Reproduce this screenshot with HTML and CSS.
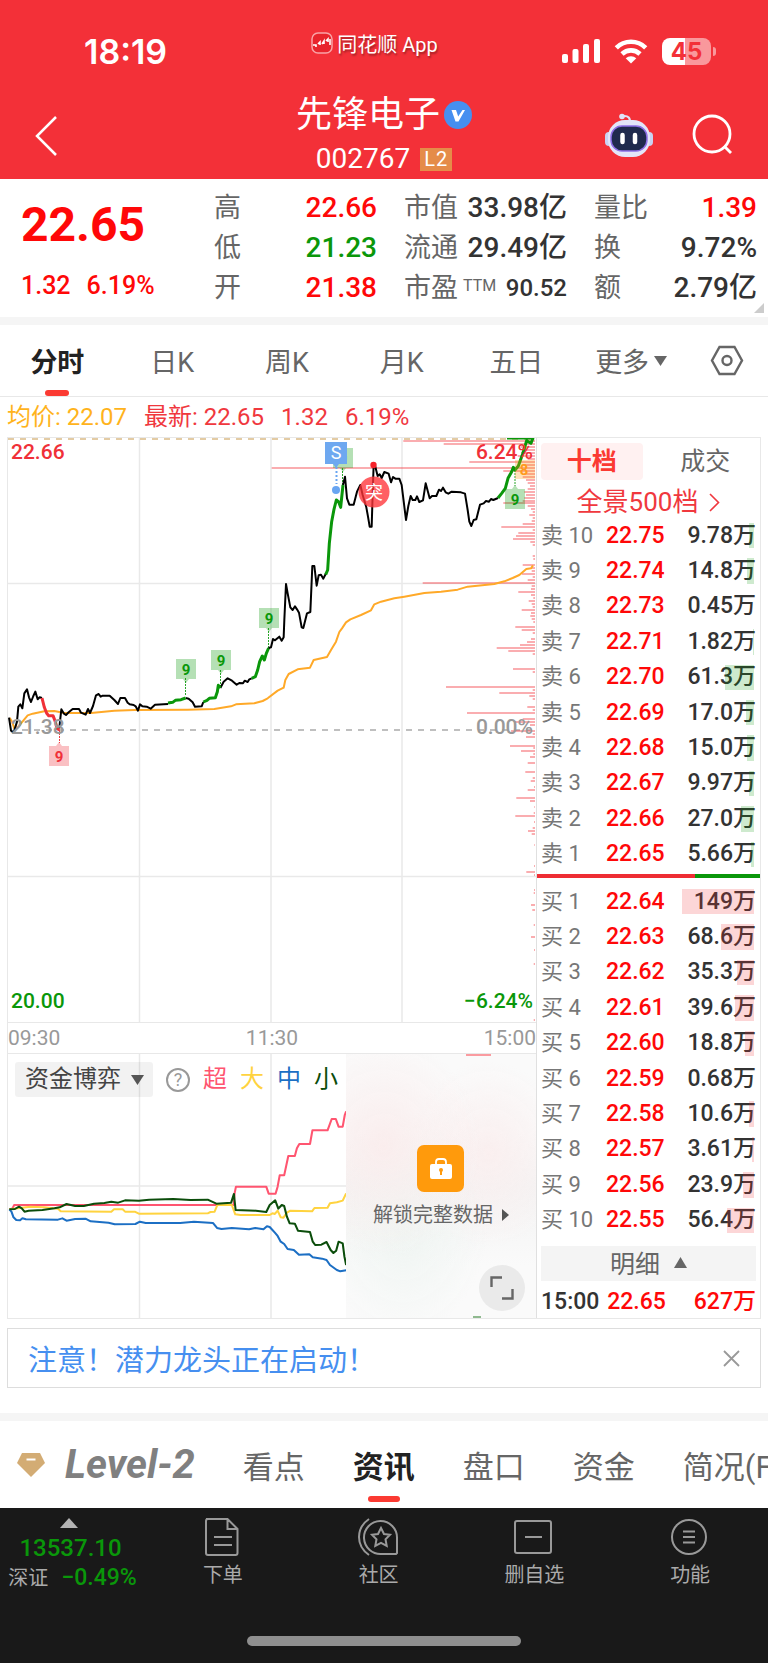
FILE: index.html
```html
<!DOCTYPE html>
<html lang="zh-CN">
<head>
    <meta charset="UTF-8">
    <meta name="viewport" content="width=device-width, initial-scale=1.0">
    <title>先锋电子 002767</title>
    <link rel="stylesheet" href="styles.css">
</head>
<body>
    <header class="header">
        <div class="status-bar">
            <span class="clock">18:19</span>
            <span class="app-name">
                <svg width="22" height="22" viewBox="0 0 22 22">
                    <rect x="1" y="1" width="20" height="20" rx="6" fill="#e8242c" stroke="#f9a3a6" stroke-width="1.5"/>
                    <path d="M2 13h3v2M7 12l2-2v3M11 12l2-3v3M15 9l2-2v3M19 7v6" fill="none" stroke="#fff" stroke-width="1.6"/>
                </svg>
                同花顺 App
            </span>
            <span class="status-icons">
                <svg width="38" height="25" viewBox="0 0 38 25" fill="#fff">
                    <rect x="0" y="15" width="6" height="9" rx="2"/>
                    <rect x="10.500" y="10" width="6" height="14" rx="2"/>
                    <rect x="21" y="5" width="6" height="19" rx="2"/>
                    <rect x="32" y="0" width="6" height="24" rx="2"/>
                </svg>
                <svg width="34" height="25" viewBox="0 0 34 25" fill="none" stroke="#fff" stroke-width="4.600">
                    <path d="M2.300 8.800a21 21 0 0 1 29.400 0"/>
                    <path d="M8 15a13 13 0 0 1 18 0"/>
                    <path d="M11.700 19.200a8 8 0 0 1 10.600 0L17 24.500z" fill="#fff" stroke="none"/>
                </svg>
                <span class="battery"><span class="battery-level">45</span></span>
            </span>
        </div>
        <div class="title-bar">
            <button class="icon-button" aria-label="返回">
                <svg width="24" height="42" viewBox="0 0 24 42" fill="none" stroke="#fff" stroke-width="2.500"><path d="M22 2L3 21l19 19"/></svg>
            </button>
            <div class="title">
                <h1>先锋电子
                    <svg width="28" height="28" viewBox="0 0 28 28"><circle cx="14" cy="14" r="14" fill="#468ff0"/><path d="M7.500 9h4.500l2.200 6.500L18.500 9H21l-6.500 11.500h-3z" fill="#fff"/></svg>
                </h1>
                <p>002767 <span class="l2">L2</span></p>
            </div>
            <div class="title-actions">
                <button class="icon-button" aria-label="智能助手">
                    <svg width="48" height="46" viewBox="0 0 48 46">
                        <path d="M18 4q8-1 7 8" fill="none" stroke="#dfe3f8" stroke-width="2"/>
                        <circle cx="17" cy="4.500" r="2.800" fill="#dfe3f8"/>
                        <rect x="0" y="20" width="8" height="14" rx="4" fill="#c9d2f2"/>
                        <rect x="40" y="20" width="8" height="14" rx="4" fill="#c9d2f2"/>
                        <rect x="3" y="8" width="42" height="37" rx="17" fill="#e3e5f8"/>
                        <rect x="6" y="14" width="36" height="25" rx="11" fill="#1f2a4d" stroke="#8d6fe6" stroke-width="1.500"/>
                        <path d="M17.500 23v7M30 23v7" stroke="#fff" stroke-width="4.500" stroke-linecap="round"/>
                    </svg>
                </button>
                <button class="icon-button" aria-label="搜索">
                    <svg width="42" height="42" viewBox="0 0 42 42" fill="none" stroke="#fff" stroke-width="2.800"><circle cx="20" cy="20" r="18"/><path d="M32 32l7 7"/></svg>
                </button>
            </div>
        </div>
    </header>

    <section class="quote">
        <div class="quote-price">
            <strong>22.65</strong>
            <span>1.32</span><span>6.19%</span>
        </div>
        <dl>
            <div><dt>高</dt><dd class="red">22.66</dd></div>
            <div><dt>低</dt><dd class="green">21.23</dd></div>
            <div><dt>开</dt><dd class="red">21.38</dd></div>
        </dl>
        <dl>
            <div><dt>市值</dt><dd>33.98亿</dd></div>
            <div><dt>流通</dt><dd>29.49亿</dd></div>
            <div><dt>市盈<sup>TTM</sup></dt><dd class="small">90.52</dd></div>
        </dl>
        <dl>
            <div><dt>量比</dt><dd class="red">1.39</dd></div>
            <div><dt>换</dt><dd>9.72%</dd></div>
            <div><dt>额</dt><dd>2.79亿</dd></div>
        </dl>
    </section>

    <nav class="period-tabs">
        <button class="active">分时</button>
        <button>日K</button>
        <button>周K</button>
        <button>月K</button>
        <button>五日</button>
        <button>更多<svg width="13" height="10" viewBox="0 0 13 10" fill="#666"><path d="M0 0h13L6.500 10z"/></svg></button>
        <button aria-label="设置">
            <svg width="34" height="31" viewBox="0 0 34 31" fill="none" stroke="#666" stroke-width="2.400"><path d="M9.500 2h15L32 15.500 24.500 29h-15L2 15.500z"/><circle cx="17" cy="15.500" r="4.500"/></svg>
        </button>
    </nav>

    <p class="legend"><span class="avg">均价: 22.07</span><span>最新: 22.65</span><span>1.32</span><span>6.19%</span></p>

    <main class="board">
        <div class="charts">
            <div class="price-chart">
                <svg class="plot" viewBox="0 1 528 584">
                    <path class="grid" d="M131.500 0v586M263 0v586M394 0v586M0 146.500h528M0 439.500h528"/>
                    <path d="M0 2h528" stroke="#e3cba4" stroke-width="2" stroke-dasharray="6 6"/>
                    <path d="M14 293h514" stroke="#aaa" stroke-width="1.500" stroke-dasharray="6 6"/>
                    <path id="volume" stroke="#f23c42" stroke-opacity=".42" stroke-width="2"/>
                    <g class="marker-line">
                        <path d="M177.500 241v18M212.500 233v16M260.500 191v20M334.500 31v18M507 33v16" stroke="#2ba52b"/>
                        <path d="M51.500 293v13" stroke="#f23c42"/>
                    </g>
                    <!-- average price -->
                    <g class="line" stroke="#ffa928" transform="scale(.33333) translate(-21 -51)">
                        <path d="M26 893L33 905L40 925L50 922L60 910L80 886L95 881L130 874L160 873L190 879H270L340 872L400 870L560 869L640 867L690 859L705 853L760 850L785 843L800 835L830 812L848 803L853 780L863 762L890 748L927 743L938 720L978 711L990 690L1005 665L1015 636L1023 625L1035 607L1048 598L1080 585L1110 571L1120 553L1140 545L1180 535L1210 530L1270 519L1320 515L1370 509L1400 500L1480 492L1510 484L1535 474L1555 465L1576 447L1590 445L1596 436"/>
                    </g>
                    <!-- morning session -->
                    <g class="line" stroke="#000" transform="scale(.33333) translate(-21 -51)">
                        <path d="M24 893L30 932L38 938L48 905L52 860L58 853L64 865L70 820L78 808L84 832L90 846L97 828L103 815L110 838L116 832L123 834"/>
                        <path d="M175 925L177 905L181 868L188 880L195 885L203 877L215 867H234L240 878L254 884L261 867L267 879L276 858L285 826L293 822L299 830L305 827H326L340 840L351 852L358 834H372L380 848L386 853L398 855L404 859L411 872L417 853L424 859L437 860L449 866L462 854L501 852"/>
                        <path d="M554 834L563 836L575 847L582 860L602 859L607 846M658 804L668 785L680 775L693 782L707 794L715 789L726 790L731 782L740 786L745 778L752 775"/>
                        <path class="down" d="M123 834L130 862L137 880L143 887H156L163 905L168 925L175 930"/>
                        <path class="up" d="M501 849L515 847L523 841L540 839L554 834M607 846L618 841L625 835L643 833L649 815L652 796L658 804M752 775L763 770L770 750L776 725L784 708L790 720L796 700L803 684"/>
                    </g>
                    <!-- afternoon session -->
                    <g class="line" stroke="#000" transform="scale(.33333) translate(759 -51)">
                        <path d="M23 684L30 682L36 657L42 661L55 650L62 662L68 652L70 600L75 492L80 520L88 562L95 570L102 559L108 568L114 578L122 622L127 624L138 580L148 576L154 438H160L167 497L173 466L180 464L187 476L194 462"/>
                        <path d="M246 195L252 170L258 235L265 254H278L288 215L298 195L305 225L316 262L321 290L326 320H332L336 190L338 135L343 140L350 168L356 163L362 174L370 156L383 161L390 187L396 171L403 176H415L422 195L435 300L442 258L449 228L455 240H463L468 229L475 246L486 241L494 190L506 235L513 228H526L534 209L540 213L546 203L554 217L562 221L572 215L600 217L612 221L620 270L625 305L631 318L638 300L646 298L657 254L668 250L675 243L684 245L690 237L697 240L711 234"/>
                        <path class="up" d="M194 464L200 450L205 370L212 305L219 268L226 240L233 246L239 262L246 195M711 234L722 220L733 205L741 175L752 155L757 142L762 150L772 138L785 102L797 62L810 70L816 54M738 54H820"/>
                    </g>
                    <g class="marker" fill="#0a970a">
                        <path d="M168 222h20v20h-7l-3 4-3-4h-7zM203 213h20v20h-7l-3 4-3-4h-7zM251 171h20v20h-7l-3 4-3-4h-7zM325 11h20v20h-7l-3 4-3-4h-7zM497 52h7l3-4 3 4h7v20h-20z" fill-opacity=".3"/>
                        <text x="178" y="238">9</text>
                        <text x="213" y="229">9</text>
                        <text x="261" y="187">9</text>
                        <text x="335" y="27">9</text>
                        <text x="507" y="68">9</text>
                    </g>
                    <g class="marker" fill="#f03038">
                        <path d="M41 309h7l3-4 3 4h7v20H41z" fill-opacity=".3"/>
                        <text x="51" y="325">9</text>
                    </g>
                    <g class="marker" fill="#ff9a1c">
                        <rect x="507" y="23" width="20" height="19" fill-opacity=".3"/>
                        <text x="516" y="38">8</text>
                    </g>
                    <path d="M328.500 30v17" stroke="#68a5f2" stroke-width="2" stroke-dasharray="2 2"/>
                    <path d="M317 5h22v22h-8l-3 4-3-4h-8z" fill="#6ea8f0"/>
                    <circle cx="328" cy="53" r="4" fill="#68a5f2"/>
                    <text class="sell" x="328" y="22">S</text>
                    <circle cx="366" cy="55" r="15.500" fill="#ff3338" fill-opacity=".78"/>
                    <circle cx="365.500" cy="28" r="3.200" fill="#f5222a"/>
                    <text class="breakout" x="366" y="62">突</text>
                </svg>
                <span class="scale top left">22.66</span>
                <span class="scale top right">6.24%</span>
                <span class="scale middle left">21.38</span>
                <span class="scale middle right">0.00%</span>
                <span class="scale bottom left">20.00</span>
                <span class="scale bottom right">−6.24%</span>
            </div>
            <div class="times"><span>09:30</span><span>11:30</span><span>15:00</span></div>
            <div class="fund-chart">
                <svg class="plot" viewBox="0 0 528 264">
                    <path class="grid" d="M131.500 0v264M263 0v264M394 0v264M0 132h528"/>
                    <g class="line" transform="scale(.34435 .33333) translate(-20 -582)">
                        <path stroke="#ff5570" d="M24 1048L33 1045L38 1035H675L678 1000L682 980H770L777 1001H797L803 980L809 946H822L834 888H853L859 865L866 852H897L904 811H948L960 777H972L980 800H992L998 765L1002 754"/>
                        <path stroke="#ffd33f" d="M24 1048L60 1043L85 1040L125 1042L165 1046L173 1054L320 1055L328 1048H353L360 1055H388L400 1061L600 1060L608 1056L620 1055L628 1035H670L680 1063L695 1065H780L788 1060L795 1062L803 1052L812 1072L820 1073L830 1058L840 1052L903 1054L910 1044L948 1043L955 1030L975 1027L992 1022L1002 1000"/>
                        <path stroke="#1c6fc4" d="M24 1048L30 1055L36 1072L44 1080L55 1081L62 1075L72 1078L165 1079L178 1075L190 1082L215 1077L245 1076L260 1084L312 1088L330 1093L390 1092L403 1085L420 1089H520L560 1085L615 1089L627 1104L640 1107L670 1104L720 1108L738 1104L762 1108L772 1099L780 1101L795 1118L803 1128L812 1145L822 1152L832 1167L850 1170L865 1184L895 1183L905 1192L932 1196L945 1200L955 1215L975 1230L985 1234L1002 1231"/>
                        <path stroke="#0b4d0b" d="M24 1048L40 1047L52 1040L60 1045L68 1055L80 1052L120 1050L155 1045L170 1042L190 1032L215 1038H240L270 1031L300 1029L320 1025L340 1028L360 1021L400 1022L430 1019L500 1017L550 1020L600 1019L625 1031L668 1028L676 1002L681 1050L740 1052L770 1056L780 1035L796 1021L805 1046L815 1035L822 1038L830 1070L838 1090L853 1091L862 1112L897 1116L905 1145L912 1155L930 1154L945 1146L957 1170L965 1179L973 1172L980 1145L992 1150L997 1190L1002 1215"/>
                    </g>
                </svg>
                <div class="fund-bar">
                    <span class="picker">
                        <select aria-label="指标"><option>资金博弈</option></select>
                        <svg width="13" height="10" viewBox="0 0 13 10" fill="#555"><path d="M0 0h13L6.500 10z"/></svg>
                    </span>
                    <button class="help" aria-label="说明">?</button>
                    <span class="f-super">超</span><span class="f-large">大</span><span class="f-mid">中</span><span class="f-small">小</span>
                </div>
                <div class="locked">
                    <a href="#">
                        <svg width="47" height="47" viewBox="0 0 47 47">
                            <rect width="47" height="47" rx="7" fill="#ff9a0c"/>
                            <rect x="13" y="19" width="22" height="15" rx="2" fill="#fff"/>
                            <path d="M19 20v-3q0-3 3-3h4q3 0 3 3v3" fill="none" stroke="#fff" stroke-width="1.800"/>
                            <circle cx="24" cy="25" r="2" fill="#ff9a0c"/><path d="M24 25v5" stroke="#ff9a0c" stroke-width="2"/>
                        </svg>
                        <span>解锁完整数据 <svg width="7" height="12" viewBox="0 0 7 12" fill="#555"><path d="M0 0l7 6-7 6z"/></svg></span>
                    </a>
                    <button class="expand" aria-label="全屏">
                        <svg width="24" height="24" viewBox="0 0 24 24" fill="none" stroke="#666" stroke-width="2.400"><path d="M1.500 11V1.500H12M22.500 13v9.500H12"/></svg>
                    </button>
                </div>
            </div>
        </div>

        <aside class="book">
            <div class="book-tabs">
                <button class="active">十档</button>
                <button>成交</button>
            </div>
            <a class="depth-link" href="#">全景500档 <svg width="11" height="19" viewBox="0 0 11 19" fill="none" stroke="#f0383e" stroke-width="1.600"><path d="M1 1l8.500 8.500L1 18"/></svg></a>
            <table class="orders" id="asks"></table>
            <div class="ratio"></div>
            <table class="orders" id="bids"></table>
            <button class="detail">明细 <svg width="13" height="11" viewBox="0 0 13 11" fill="#666"><path d="M0 11h13L6.500 0z"/></svg></button>
            <div class="last-trade"><span>15:00</span><span class="red">22.65</span><span class="red">627万</span></div>
        </aside>
    </main>

    <div class="notice">
        <a href="#">注意！潜力龙头正在启动！</a>
        <button aria-label="关闭"><svg width="17" height="17" viewBox="0 0 17 17" stroke="#999" stroke-width="1.800"><path d="M1 1l15 15M16 1L1 16"/></svg></button>
    </div>

    <nav class="info-tabs">
        <button class="level">
            <svg width="28" height="24" viewBox="0 0 28 24"><path d="M5 0h18l5 10-14 14L0 10z" fill="#d3ac74"/><path d="M9.500 6.500h9" stroke="#fff" stroke-width="2"/></svg>
            <span>Level-2</span>
        </button>
        <button>看点</button>
        <button class="active">资讯</button>
        <button>盘口</button>
        <button>资金</button>
        <button>简况(F10)</button>
    </nav>

    <footer class="footer">
        <div class="toolbar">
            <a class="index" href="#">
                <svg width="18" height="10" viewBox="0 0 18 10" fill="#b3b3b3"><path d="M0 10h18L9 0z"/></svg>
                <strong>13537.10</strong>
                <span>深证 <b>−0.49%</b></span>
            </a>
            <a href="#">
                <svg width="42" height="38" viewBox="0 0 42 38"><path d="M4 1h21.500l10 10v24q0 2-2 2H6q-2 0-2-2V3q0-2 2-2M25.500 1v10h10M12 19h18M12 27h18"/></svg>
                <span>下单</span>
            </a>
            <a href="#">
                <svg width="42" height="38" viewBox="0 0 42 38"><path d="M38 36H24a16.500 16.500 0 1 1 15-16v15z"/><path d="M11 1Q1 8 1 19t10 18"/><path d="M23 10l3 6 6 .800-4.500 4.500 1.200 6.500-5.700-3-5.700 3 1.200-6.500L14 16.800l6-.800z"/></svg>
                <span>社区</span>
            </a>
            <a href="#">
                <svg width="42" height="38" viewBox="0 0 42 38"><rect x="2" y="3" width="36" height="32" rx="2"/><path d="M12 19h17"/></svg>
                <span>删自选</span>
            </a>
            <a href="#">
                <svg width="42" height="38" viewBox="0 0 42 38"><circle cx="20" cy="19" r="17"/><path d="M14 13.500h12M14 19h12M14 24.500h12"/></svg>
                <span>功能</span>
            </a>
        </div>
        <div class="home-bar"></div>
    </footer>

    <script src="script.js"></script>
</body>
</html>
```
FILE: styles.css
```css
* {
    box-sizing: border-box;
}

body {
    margin: 0;
    font-family: Roboto, "Noto Sans CJK SC", sans-serif;
    background: #fff;
    color: #333;
    overflow-x: hidden;
}

h1, p, dl, dd {
    margin: 0;
}

button {
    border: none;
    padding: 0;
    background: none;
    font: inherit;
    color: inherit;
    cursor: pointer;
}

a {
    color: inherit;
    text-decoration: none;
}

svg {
    display: block;
}

.red {
    color: #ff0808;
}

.green {
    color: #0a970a;
}

/* header */
.header {
    background: #f33038;
    color: #fff;
    height: 179px;
}

.status-bar {
    display: grid;
    grid-template-columns: 1fr auto 1fr;
    height: 84px;
    padding: 18px 53px 0 84px;
}

.clock {
    font: 600 34px/68px Inter, sans-serif;
}

.app-name {
    display: flex;
    gap: 4px;
    align-items: center;
    height: 50px;
    font-size: 20px;
    padding-right: 50px;
    text-shadow: 1px 2px 2px rgba(0, 0, 0, 0.35);
}

.status-icons {
    display: flex;
    align-items: center;
    justify-content: flex-end;
    gap: 14px;
    height: 66px;
}

.battery {
    position: relative;
    width: 49px;
    height: 27px;
    border-radius: 8px;
    background: linear-gradient(90deg, #fff 46%, #f9989c 46%);
    color: #f33038;
    font: 700 24px/27px Inter, sans-serif;
    text-align: center;
    margin-right: 4px;
}

.battery::after {
    content: "";
    position: absolute;
    left: 51px;
    top: 9px;
    width: 3px;
    height: 9px;
    border-radius: 0 4px 4px 0;
    background: #f9989c;
}

.title-bar {
    display: grid;
    grid-template-columns: 1fr auto 1fr;
    padding: 7px 34px 0;
}

.title-bar > .icon-button {
    justify-self: start;
    height: 90px;
}

.title {
    text-align: center;
}

.title h1 {
    display: flex;
    align-items: center;
    gap: 4px;
    font-size: 36px;
    font-weight: 400;
    line-height: 48px;
}

.title p {
    display: flex;
    justify-content: center;
    align-items: center;
    gap: 10px;
    font-size: 28px;
    line-height: 40px;
}

.l2 {
    background: #e58c49;
    font-size: 20px;
    line-height: 23px;
    width: 32px;
    letter-spacing: 1px;
}

.title-actions {
    display: flex;
    justify-content: flex-end;
    align-items: center;
    gap: 39px;
    height: 88px;
}

/* quote */
.quote {
    position: relative;
    display: grid;
    grid-template-columns: 166fr 163fr 163fr 163fr;
    gap: 27px;
    padding: 9px 11px 9px 21px;
    border-bottom: 8px solid #f5f5f5;
}

.quote::after {
    content: "";
    position: absolute;
    right: 4px;
    bottom: 4px;
    border: 5px solid;
    border-color: transparent #ccc #ccc transparent;
}

.quote-price {
    color: #ff0808;
    font-size: 25px;
    font-weight: 500;
    white-space: nowrap;
}

.quote-price strong {
    display: block;
    font-size: 48px;
    line-height: 74px;
    height: 78px;
}

.quote-price span {
    line-height: 40px;
    margin-right: 16px;
}

.quote dl > div {
    display: flex;
    justify-content: space-between;
    line-height: 40px;
    height: 40px;
    font-size: 27px;
}

.quote dt {
    color: #666;
    white-space: nowrap;
}

.quote dd {
    font-size: 28px;
    font-weight: 500;
}

.quote dd.small {
    font-size: 24px;
}

.quote sup {
    font-size: 16px;
    line-height: 16px;
    margin-left: 5px;
    vertical-align: 6px;
}

/* period tabs */
.period-tabs {
    display: grid;
    grid-template-columns: repeat(6, 3fr) 2fr;
    height: 72px;
    padding-right: 3px;
    border-bottom: 1px solid #e8e8e8;
    font-size: 27px;
    color: #666;
}

.period-tabs button {
    position: relative;
    display: flex;
    align-items: center;
    justify-content: center;
    gap: 5px;
}

.period-tabs .active,
.info-tabs .active {
    color: #222;
    font-weight: 700;
}

.period-tabs .active::after,
.info-tabs .active::after {
    content: "";
    position: absolute;
    left: 50%;
    bottom: 0;
    width: 24px;
    height: 6px;
    margin-left: -12px;
    border-radius: 3px;
    background: #fb3a32;
}

.legend {
    display: flex;
    gap: 17px;
    padding: 1px 7px 0;
    font-size: 24px;
    line-height: 39px;
    color: #f0383e;
}

.legend .avg {
    color: #ffb31c;
}

/* charts */
.board {
    display: grid;
    grid-template-columns: 529fr 223fr;
    margin: 0 7px;
    border: 1px solid #e8e8e8;
}

.charts {
    border-right: 1px solid #e0e0e0;
}

.plot {
    width: 100%;
    height: auto;
}

.grid {
    stroke: #e9e9e9;
    stroke-width: 1.5;
}

.line path {
    fill: none;
    stroke-width: 6;
    stroke-linejoin: round;
}

.line .up {
    stroke: #0a970a;
    stroke-width: 9;
}

.line .down {
    stroke: #f03038;
    stroke-width: 9;
}

.marker-line {
    stroke-width: 1;
    stroke-dasharray: 2 1;
}

.marker text,
.sell,
.breakout {
    font-size: 15px;
    font-weight: 700;
    text-anchor: middle;
}

.sell,
.breakout {
    fill: #fff;
    font-size: 18px;
    font-weight: 400;
}

.price-chart {
    position: relative;
    border-bottom: 1px solid #e8e8e8;
}

.scale {
    position: absolute;
    font-size: 21px;
    line-height: 28px;
    font-weight: 500;
    color: #999;
}

.left {
    left: 3px;
}

.right {
    right: 3px;
}

.top {
    top: 0;
    color: #f03038;
}

.middle {
    top: 50%;
    margin-top: -17px;
}

.bottom {
    bottom: 7px;
    color: #0a970a;
}

.times {
    display: flex;
    justify-content: space-between;
    font-size: 21px;
    line-height: 30px;
    color: #999;
    border-bottom: 1px solid #e8e8e8;
}

.fund-chart {
    position: relative;
}

.fund-bar {
    position: absolute;
    top: 8px;
    left: 7px;
    display: flex;
    align-items: center;
    gap: 13px;
    font-size: 24px;
    line-height: 35px;
}

.picker {
    display: flex;
    align-items: center;
    width: 138px;
    height: 35px;
    border-radius: 3px;
    background: rgba(0, 0, 0, 0.05);
}

.picker select {
    appearance: none;
    border: none;
    width: 138px;
    height: 35px;
    padding: 0 0 0 10px;
    background: none;
    font: inherit;
    color: #444;
}

.picker svg {
    margin-left: -22px;
}

.help {
    width: 24px;
    height: 24px;
    border: 2px solid #999;
    border-radius: 50%;
    font-size: 18px;
    line-height: 20px;
    color: #999;
}

.f-super { color: #ff5570; }
.f-large { color: #ffd33f; }
.f-mid { color: #1c6fc4; }
.f-small { color: #0b4d0b; }

.locked {
    position: absolute;
    top: 0;
    right: 0;
    width: 36%;
    height: 100%;
    padding-top: 91px;
    background:
        linear-gradient(#fa9ba0, #fa9ba0) 73% 0 / 25px 2px no-repeat,
        linear-gradient(#8fb98f, #8fb98f) 70% 100% / 8px 2px no-repeat,
        radial-gradient(ellipse at 20% 35%, #faeded, transparent 45%),
        radial-gradient(ellipse at 75% 38%, #faefef, transparent 40%),
        radial-gradient(ellipse at 30% 65%, #eff5f2, transparent 45%),
        linear-gradient(#fafafa 30%, #f3f3f3 50%, #fafafa 80%);
}

.locked a {
    display: flex;
    flex-direction: column;
    align-items: center;
    gap: 8px;
    font-size: 20px;
    line-height: 30px;
    color: #666;
}

.locked a span {
    display: flex;
    align-items: center;
    gap: 9px;
}

.expand {
    position: absolute;
    right: 11px;
    bottom: 7px;
    width: 46px;
    height: 46px;
    padding: 11px;
    border-radius: 50%;
    background: #eaeaea;
}

/* order book */
.book {
    padding: 5px 4px 0;
}

.book-tabs {
    display: grid;
    grid-template-columns: 1fr 1fr;
    gap: 12px;
    font-size: 25px;
    line-height: 37px;
    color: #666;
}

.book-tabs .active {
    background: #fff1f1;
    border-radius: 4px;
    color: #fb3a32;
    font-weight: 700;
}

.depth-link {
    display: flex;
    justify-content: center;
    align-items: center;
    gap: 11px;
    padding-top: 6px;
    font-size: 26px;
    line-height: 32px;
    color: #f0383e;
}

.orders {
    width: 100%;
    height: 354px;
    border-collapse: collapse;
    font-size: 23px;
    line-height: 30px;
}

.orders th {
    width: 60px;
    padding: 0;
    font-size: 22px;
    font-weight: 400;
    text-align: left;
    color: #777;
    white-space: nowrap;
}

.orders td {
    position: relative;
    padding: 0;
    font-weight: 500;
}

.orders .price {
    color: #ff0808;
    padding-left: 5px;
}

.orders .volume {
    text-align: right;
}

.orders .bar {
    position: absolute;
    right: 2px;
    top: 5px;
    bottom: 5px;
    background: rgba(10, 151, 10, 0.2);
}

#bids .bar {
    background: rgba(240, 48, 56, 0.2);
}

.ratio {
    height: 4px;
    margin: 2px -4px 6px;
    background: linear-gradient(90deg, #ee2d33 71%, #0a970a 71%);
}

.detail {
    display: flex;
    width: 100%;
    height: 35px;
    margin-top: 8px;
    padding-bottom: 3px;
    align-items: center;
    justify-content: center;
    gap: 14px;
    background: #f4f4f4;
    font-size: 25px;
    color: #666;
}

.last-trade {
    display: flex;
    justify-content: space-between;
    padding-top: 4px;
    font-size: 23px;
    line-height: 33px;
    font-weight: 500;
}

.last-trade span:nth-child(2) {
    margin-right: 20px;
}

/* notice */
.notice {
    display: flex;
    justify-content: space-between;
    align-items: center;
    height: 60px;
    margin: 9px 7px 25px;
    padding: 0 20px;
    border: 1px solid #ddd;
    font-size: 29px;
    color: #468ff0;
}

/* info tabs */
.info-tabs {
    display: flex;
    gap: 48px;
    height: 95px;
    padding-left: 17px;
    border-top: 8px solid #f5f5f5;
    font-size: 31px;
    color: #666;
    white-space: nowrap;
    overflow: hidden;
}

.info-tabs button {
    position: relative;
    flex-shrink: 0;
}

.info-tabs .active::after {
    bottom: 6px;
    width: 32px;
    margin-left: -16px;
}

.level {
    display: flex;
    align-items: center;
    gap: 20px;
}

.level span {
    font-size: 40px;
    font-style: italic;
    font-weight: 700;
    color: #808080;
}

/* footer */
.footer {
    height: 155px;
    background: #191919;
    color: #aaa;
}

.toolbar {
    display: grid;
    grid-template-columns: 145px repeat(4, 1fr);
    height: 128px;
    padding-top: 10px;
}

.toolbar a {
    display: flex;
    flex-direction: column;
    align-items: center;
    font-size: 20px;
    line-height: 38px;
}

.toolbar a svg {
    fill: none;
    stroke: #999;
    stroke-width: 2;
}

.toolbar .index svg {
    margin-left: -8px;
    fill: #b3b3b3;
    stroke: none;
}

.index strong {
    font-size: 24px;
    font-weight: 500;
    line-height: 40px;
    height: 34px;
    margin-right: 4px;
    color: #0a970a;
}

.index span {
    line-height: 32px;
}

.index b {
    margin-left: 8px;
    font-size: 23px;
    font-weight: 500;
    color: #0a970a;
}

.home-bar {
    width: 274px;
    height: 10px;
    margin: 0 auto;
    border-radius: 5px;
    background: #8f8f8f;
}
```
FILE: script.js
```js
const asks = [
    [10, '22.75', '9.78'], [9, '22.74', '14.8'], [8, '22.73', '0.45'], [7, '22.71', '1.82'], [6, '22.70', '61.3'],
    [5, '22.69', '17.0'], [4, '22.68', '15.0'], [3, '22.67', '9.97'], [2, '22.66', '27.0'], [1, '22.65', '5.66']
];
const bids = [
    [1, '22.64', '149'], [2, '22.63', '68.6'], [3, '22.62', '35.3'], [4, '22.61', '39.6'], [5, '22.60', '18.8'],
    [6, '22.59', '0.68'], [7, '22.58', '10.6'], [8, '22.57', '3.61'], [9, '22.56', '23.9'], [10, '22.55', '56.4']
];

function fillOrders(id, side, rows) {
    document.getElementById(id).innerHTML = rows.map(([level, price, volume]) => `
        <tr>
            <th scope="row">${side} ${level}</th>
            <td class="price">${price}</td>
            <td class="volume"><span class="bar" style="width: ${Math.round(volume * 0.48)}px"></span>${volume}万</td>
        </tr>`).join('');
}

fillOrders('asks', '卖', asks);
fillOrders('bids', '买', bids);

// volume by price, [y, length], in thirds of a chart unit
const volumes = [
    [64, 395], [73, 274], [82, 42], [90, 32], [99, 42], [108, 52], [117, 22], [126, 197], [135, 32], [144, 790],
    [153, 95], [162, 32], [171, 37], [180, 27], [189, 22], [197, 15], [206, 22], [215, 32], [224, 27], [233, 32],
    [242, 37], [250, 95], [259, 22], [268, 12], [277, 7], [286, 17], [295, 7], [303, 10], [312, 37], [321, 101],
    [330, 7], [339, 50], [347, 57], [356, 66], [365, 14], [374, 7], [409, 7], [418, 5], [435, 37], [444, 12],
    [453, 10], [462, 39], [471, 7], [480, 22], [489, 337], [498, 10], [507, 12], [516, 50], [525, 12], [534, 5],
    [543, 19], [552, 10], [560, 7], [569, 40], [578, 12], [587, 14], [596, 10], [605, 5], [622, 59], [631, 40],
    [640, 7], [658, 12], [667, 24], [676, 45], [685, 115], [694, 80], [703, 7], [747, 66], [756, 7], [800, 267],
    [809, 7], [818, 107], [827, 17], [836, 7], [862, 23], [871, 7], [880, 204], [896, 37], [906, 62], [915, 15],
    [932, 72], [941, 7], [950, 27], [977, 75], [985, 5], [994, 42], [1003, 5], [1011, 15], [1029, 22], [1055, 29],
    [1073, 7], [1082, 13], [1100, 3], [1109, 22], [1135, 56], [1144, 15], [1161, 2], [1180, 4], [1188, 59],
    [1206, 3], [1223, 7], [1232, 21], [1241, 10], [1276, 2], [1339, 3], [1357, 26], [1365, 3], [1410, 3],
    [1418, 4], [1455, 12], [1470, 8], [1515, 4], [1551, 12], [1590, 3], [1632, 4], [1800, 4]
];
document.getElementById('volume').setAttribute('d',
    volumes.map(([y, len]) => `M527 ${Math.round(y / 3 - 17)}h-${(len / 3).toFixed(1)}`).join(''));
```
